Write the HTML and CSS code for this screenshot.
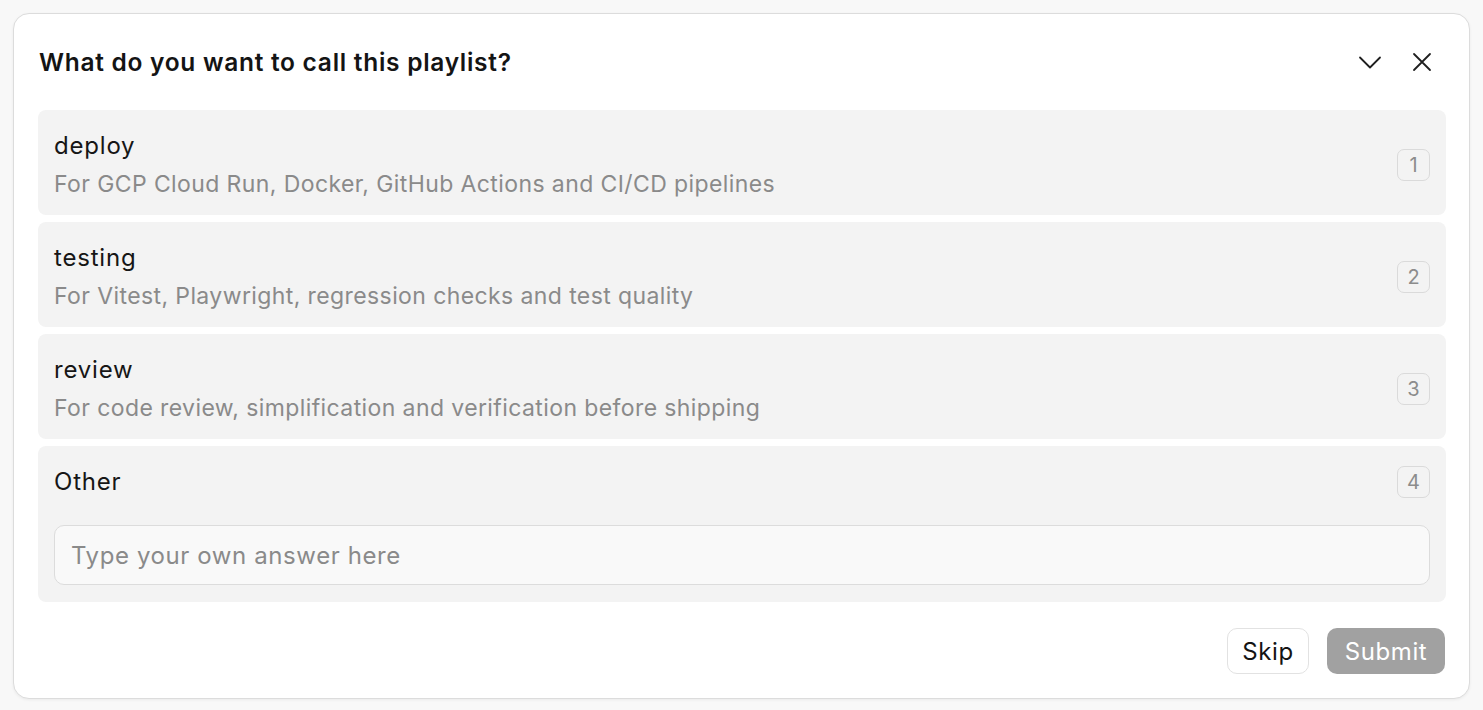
FILE: index.html
```html
<!DOCTYPE html>
<html lang="en">
<head>
<meta charset="utf-8">
<title>Name playlist</title>
<link rel="stylesheet" href="styles.css">
</head>
<body>
<div class="dialog">
  <header class="dialog-header">
    <h1 class="dialog-title">What do you want to call this playlist?</h1>
    <div class="header-actions">
      <button class="icon-btn" aria-label="Collapse">
        <svg width="24" height="24" viewBox="0 0 24 24" fill="none" stroke="#1f1f1f" stroke-width="1.8" stroke-linecap="round" stroke-linejoin="round"><path d="M2 7.5l10 10 10-10"/></svg>
      </button>
      <button class="icon-btn" aria-label="Close">
        <svg width="24" height="24" viewBox="0 0 24 24" fill="none" stroke="#1f1f1f" stroke-width="1.8" stroke-linecap="round"><path d="M4 4l16 16M20 4L4 20"/></svg>
      </button>
    </div>
  </header>

  <div class="options">
    <div class="option">
      <div class="option-text">
        <div class="option-label">deploy</div>
        <div class="option-desc">For GCP Cloud Run, Docker, GitHub Actions and CI/CD pipelines</div>
      </div>
      <span class="key">1</span>
    </div>
    <div class="option">
      <div class="option-text">
        <div class="option-label">testing</div>
        <div class="option-desc">For Vitest, Playwright, regression checks and test quality</div>
      </div>
      <span class="key">2</span>
    </div>
    <div class="option">
      <div class="option-text">
        <div class="option-label">review</div>
        <div class="option-desc">For code review, simplification and verification before shipping</div>
      </div>
      <span class="key">3</span>
    </div>
    <div class="option option-other">
      <div class="other-row">
        <div class="option-label">Other</div>
        <span class="key">4</span>
      </div>
      <input class="answer-input" type="text" placeholder="Type your own answer here">
    </div>
  </div>

  <footer class="dialog-footer">
    <button class="btn btn-skip">Skip</button>
    <button class="btn btn-submit">Submit</button>
  </footer>
</div>
</body>
</html>
```

FILE: styles.css
```css
* { box-sizing: border-box; }

html, body {
  margin: 0;
  height: 100%;
}

body {
  background: #f8f8f8;
  padding: 13px;
  font-family: Inter, "Noto Sans", "Liberation Sans", sans-serif;
  color: #1a1a1a;
}

.dialog {
  width: 1457px;
  height: 686px;
  background: #ffffff;
  border: 1px solid #dcdcdc;
  border-radius: 16px;
  box-shadow: 0 1px 3px rgba(0, 0, 0, 0.06);
  padding: 0 23px 24px 24px;
  display: flex;
  flex-direction: column;
}

.dialog-header {
  height: 96px;
  display: flex;
  align-items: center;
  justify-content: space-between;
}

.dialog-title {
  margin: 0;
  font-size: 24.5px;
  font-weight: 600;
  letter-spacing: 0.72px;
  color: #141414;
  padding-left: 1px;
}

.header-actions {
  display: flex;
  align-items: center;
  gap: 28px;
  padding-right: 12px;
}

.icon-btn {
  border: 0;
  background: none;
  padding: 0;
  width: 24px;
  height: 24px;
  display: flex;
  align-items: center;
  justify-content: center;
  cursor: pointer;
}

.options {
  display: flex;
  flex-direction: column;
  gap: 7px;
}

.option {
  background: #f3f3f3;
  border-radius: 8px;
  min-height: 105px;
  padding: 21px 16px 16px 16px;
  display: flex;
  align-items: center;
  justify-content: space-between;
}

.option-text {
  display: flex;
  flex-direction: column;
  gap: 8px;
}

.option-label {
  font-size: 24px;
  line-height: 30px;
  letter-spacing: 0.8px;
  color: #161616;
}

.option-desc {
  font-size: 23px;
  line-height: 30px;
  letter-spacing: 0.4px;
  color: #8a8a8a;
}

.key {
  width: 33px;
  height: 32px;
  border: 1.5px solid #dadada;
  border-radius: 7px;
  display: flex;
  align-items: center;
  justify-content: center;
  font-size: 20px;
  color: #8c8c8c;
  flex-shrink: 0;
}

.option-other {
  flex-direction: column;
  align-items: stretch;
  gap: 27px;
  padding: 20px 16px 17px 16px;
}

.other-row {
  display: flex;
  align-items: center;
  justify-content: space-between;
}

.answer-input {
  width: 100%;
  height: 60px;
  border: 1.5px solid #dcdcdc;
  border-radius: 10px;
  background: #f9f9f9;
  padding: 0 16px;
  font-family: inherit;
  font-size: 24px;
  letter-spacing: 0.6px;
  color: #161616;
  outline: none;
}

.answer-input::placeholder {
  color: #8a8a8a;
}

.dialog-footer {
  margin-top: auto;
  display: flex;
  justify-content: flex-end;
  gap: 18px;
  padding-right: 1px;
}

.btn {
  height: 46px;
  border-radius: 10px;
  font-family: inherit;
  font-size: 24px;
  letter-spacing: 0.6px;
  padding: 0;
  display: flex;
  align-items: center;
  justify-content: center;
  cursor: pointer;
}

.btn-skip {
  width: 82px;
  background: #ffffff;
  border: 1.5px solid #e2e2e2;
  color: #141414;
}

.btn-submit {
  width: 118px;
  background: #a1a1a1;
  border: 0;
  color: #ffffff;
}
```
